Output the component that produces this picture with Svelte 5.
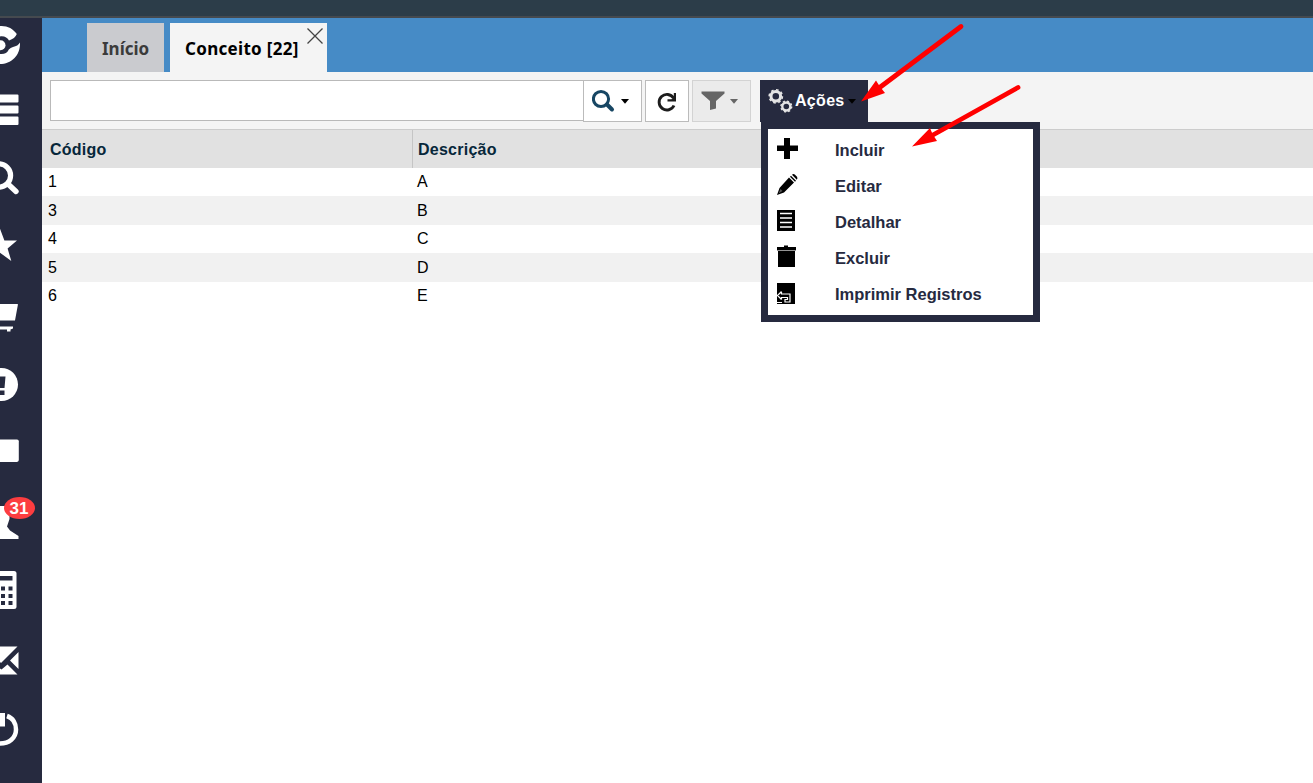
<script>
  const rows = [
    [1, 'A'],
    [3, 'B'],
    [4, 'C'],
    [5, 'D'],
    [6, 'E']
  ];
  const actions = [
    ['plus', 'Incluir'],
    ['pencil', 'Editar'],
    ['list', 'Detalhar'],
    ['trash', 'Excluir'],
    ['print', 'Imprimir Registros']
  ];
  const nav = [
    ['logo', 18, 58],
    ['menu', 76, 68],
    ['search', 144, 68],
    ['star', 212, 68],
    ['cart', 280, 70],
    ['alert', 350, 68],
    ['card', 418, 68],
    ['user', 486, 70],
    ['calc', 556, 70],
    ['mail', 626, 68],
    ['power', 694, 89]
  ];
</script>

<div class="page">
  <div class="topbar"></div>
  <div class="body">
    <nav class="sidebar">
      {#each nav as [name, top, height]}
        <div class="nav-item">
          <svg width="42" {height} viewBox="0 {top} 42 {height}" fill="#fff">
            {#if name === 'logo'}
              <path d="M0 26C7 25.500 13 28.500 16.800 34Q15 38.500 9 40.500C7.500 37.500 4 35.800 0 36.500Z" />
              <circle cx="0.500" cy="45.300" r="5" />
              <path d="M20 42.500C20.500 56 11 64 0 64V54C4 54.500 7.500 53 8.800 49.500Q10.500 47.500 13 47Q18 46 20 42.500Z" />
            {:else if name === 'menu'}
              <path d="M0 94.500h17.500q1 0 1 1v6q0 1-1 1H0ZM0 105.500h17.500q1 0 1 1v6q0 1-1 1H0ZM0 116.500h17.500q1 0 1 1v6.500q0 1-1 1H0Z" />
            {:else if name === 'search'}
              <circle cx="-1" cy="175.500" r="11.600" fill="none" stroke="#fff" stroke-width="5.200" />
              <path d="m8 184 8 7.500" stroke="#fff" stroke-width="5.400" stroke-linecap="round" />
            {:else if name === 'star'}
              <path d="m-1 226 5.400 14.500H17L7.600 248.500 11.300 261-1 252Z" />
            {:else if name === 'cart'}
              <path d="M0 304h17.500q.5 0 .4.700L15 320.500H0ZM0 326.500h13v2L10.500 329.500V331.500H7V329.500H0Z" />
            {:else if name === 'alert'}
              <circle cx="1.500" cy="384.500" r="16.500" />
              <path d="M0 376.500h5.500L4.500 388H0ZM0 390.500h4.500V395H0Z" fill="#262a3f" />
            {:else if name === 'card'}
              <path d="M0 439.500h17q1.800 0 1.800 1.800v18.800q0 1.800-1.800 1.800H0Z" />
            {:else if name === 'user'}
              <path d="M0 506H9.500V519L7 526.500 10 530.500 18.500 536V539H0Z" />
            {:else if name === 'calc'}
              <path d="M0 571h14q2.500 0 2.500 2.500v33q0 2.500-2.500 2.500H0Z" />
              <path d="M0 576h12.500v4.500H0ZM1 586.500h4v4H1ZM8.500 586.500h4v4h-4ZM1 594h4v4H1ZM8.500 594h4v4h-4ZM1 601h4v4H1ZM8.500 601h4v4h-4Z" fill="#262a3f" />
            {:else if name === 'mail'}
              <path d="M0 646.500H17.500L1 663 0 662ZM0 674.500V668.500L1.500 669.500 7.500 664.500 17.500 674.500ZM10 660.500 18.500 652V669Z" />
            {:else}
              <path d="M0 713h5v13.500H0Z" />
              <path d="M7 716C13 718 16 723.500 16 729.500 16 738 9 743.500 0 743.500" fill="none" stroke="#fff" stroke-width="4.500" />
            {/if}
          </svg>
          {#if name === 'user'}<span class="badge">31</span>{/if}
        </div>
      {/each}
    </nav>

    <main>
      <div class="tabs">
        <div class="tab home">Início</div>
        <div class="tab active">
          Conceito [22]
          <svg class="close" width="18" height="18" viewBox="0 0 18 18" fill="none" stroke="#444" stroke-width="1.300"><path d="m1.500 1.500 15 15M16.500 1.500l-15 15" /></svg>
        </div>
      </div>

      <div class="toolbar">
        <input class="query" aria-label="Pesquisar" />
        <button class="btn find" aria-label="Buscar">
          <svg width="24" height="24" viewBox="0 0 24 24" fill="none" stroke="#174663"><circle cx="9" cy="10" r="7.600" stroke-width="3" /><path d="m15 15.500 5 5" stroke-width="4" stroke-linecap="round" /></svg>
          <svg class="caret" width="8" height="5" viewBox="0 0 8 5"><path d="M0 0h8L4 4.700Z" fill="#000" /></svg>
        </button>
        <button class="btn reload" aria-label="Atualizar">
          <svg width="22" height="22" viewBox="0 0 22 22" fill="none"><path d="M17.500 7A7.800 7.800 0 1 0 18 14.500" stroke="#1d1d1d" stroke-width="2.900" /><path d="M20 2v8.500h-8.500V8.300h4L17.800 6V2Z" fill="#1d1d1d" /></svg>
        </button>
        <button class="btn filter" aria-label="Filtrar">
          <svg width="24" height="20" viewBox="0 0 24 20"><path d="M.5.500h23v2L15 10v7.500L9 19v-9L.5 2.500Z" fill="#666" /></svg>
          <svg class="caret" width="8" height="5" viewBox="0 0 8 5"><path d="M0 0h8L4 4.700Z" fill="#666" /></svg>
        </button>
        <div class="actions">
          <svg class="gears" width="26" height="26" viewBox="0 0 26 26" fill="none" stroke="#e4e4e4">
            <circle cx="7.800" cy="8.300" r="4.800" stroke-width="3" />
            <circle cx="7.800" cy="8.300" r="6.600" stroke-width="1.600" stroke-dasharray="2.600 2.584" />
            <circle cx="18.300" cy="18.500" r="4" stroke-width="2.400" />
            <circle cx="18.300" cy="18.500" r="5.400" stroke-width="1.400" stroke-dasharray="2.150 2.091" />
          </svg>
          <span class="title">Ações</span>
          <svg class="caret" width="8" height="5" viewBox="0 0 8 5"><path d="M0 0h8L4 4.700Z" fill="#000" /></svg>
          <div class="menu">
            {#each actions as [icon, label]}
              <div class="menu-item">
                <svg width="24" height="24" viewBox="0 0 24 24">
                  {#if icon === 'plus'}
                    <path d="M8 1h6v7.500h8v5.500h-8v8H8v-8H1V8.500h7Z" />
                  {:else if icon === 'pencil'}
                    <path d="m1 22 2.500-7L13 4.500l5 5L8 19.500ZM14 3.700l1-1 5 5-1 1ZM16 1.800Q17.500.500 19 1.700L21 3.800Q22 5.200 20.800 6.800Z" />
                    <path d="m2.500 20.500 2-4.500 2 2Z" fill="#555" />
                  {:else if icon === 'list'}
                    <path d="M1 1h18v21H1Z" />
                    <path d="M4 4.500h12M4 9h12M4 13.500h12M4 18h12" stroke="#fff" stroke-width="1.300" />
                  {:else if icon === 'trash'}
                    <path d="M1 2h7V.5h4V2h8v3.500H1ZM2 6h17v16H2Z" />
                    <path d="M1 5.500h19" stroke="#999" stroke-width=".8" />
                  {:else}
                    <path d="M1 2h18v21H1Z" />
                    <path d="M5.500 10.500 1.500 14.500l4 4M1.500 14.500M5.500 11v2h8.500v8H9v-2.500h2.500v-2H5.500v2M1 21.500h5" fill="none" stroke="#fff" stroke-width="1.200" />
                  {/if}
                </svg>
                <span>{label}</span>
              </div>
            {/each}
          </div>
        </div>
      </div>

      <div class="grid-row head"><div>Código</div><div>Descrição</div></div>
      {#each rows as [code, desc]}
        <div class="grid-row"><div>{code}</div><div>{desc}</div></div>
      {/each}
    </main>
  </div>

  <svg class="arrows" width="1313" height="783" viewBox="0 0 1313 783" fill="#f00" stroke="#f00" stroke-linecap="round">
    <path d="M961 26.500 879 88" stroke-width="4.800" />
    <path d="M861 101.500 876 80.500 879.500 86 885 93Z" stroke="none" />
    <path d="M1018 87.500 932 135.500" stroke-width="4.800" />
    <path d="M912 146.500 930 128 932.500 134 937 141Z" stroke="none" />
  </svg>
</div>

<style>
  :global(body) { margin: 0; overflow: hidden; }
  .page { position: relative; width: 1313px; height: 783px; overflow: hidden; background: #fff; font-family: "Liberation Sans", Arial, sans-serif; font-size: 16px; color: #000; }
  .page, .page * { box-sizing: border-box; }
  svg { display: block; flex: none; }
  .topbar { height: 18px; background: #2c3d49; border-bottom: 2px solid #454a4f; }
  .body { display: flex; height: 765px; }
  .sidebar { width: 42px; flex: none; background: #262a3f; overflow: hidden; }
  .nav-item { position: relative; }
  .badge { position: absolute; left: 4px; top: 11px; width: 31px; height: 22px; border-radius: 50%; background: #fc3d40; color: #fff; font: bold 17px/23px "Liberation Sans", Arial, sans-serif; text-align: center; padding-right: 1px; }
  main { flex: 1; min-width: 0; }
  .tabs { height: 54px; padding: 5px 0 0 45px; display: flex; gap: 6px; background: #468bc6; }
  .tab { position: relative; height: 49px; padding-left: 15px; font: bold 17px/52px "Noto Sans", sans-serif; white-space: nowrap; }
  .home { width: 77px; background: #cacbcf; color: #3b3b3b; }
  .active { width: 157px; background: #f4f4f4; letter-spacing: 0.3px; }
  .close { position: absolute; right: 3px; top: 4px; }
  .toolbar { display: flex; align-items: flex-start; height: 57px; padding: 8px 0 0 8px; background: #f4f4f4; }
  .query { width: 534px; height: 41px; border: 1px solid #b9b9b9; background: #fff; padding: 0 8px; outline: 0; border-radius: 0; }
  .btn { display: flex; align-items: center; height: 42px; margin: 0; padding: 0; border: 1px solid #bbb; background: #fff; }
  .find { width: 59px; margin-left: -1px; padding-left: 8px; gap: 4px; }
  .find .caret { margin-left: 1px; }
  .reload { width: 44px; margin-left: 3px; padding: 2px 0 0 10px; }
  .filter { width: 59px; margin-left: 3px; padding-left: 8px; gap: 5px; background: #ebebeb; border-color: #d3d3d3; }
  .actions { position: relative; z-index: 1; display: flex; width: 108px; height: 42px; margin-left: 9px; padding: 0 0 0 8px; background: #262a3f; color: #fff; font-weight: bold; line-height: 41px; }
  .title { letter-spacing: 0.3px; }
  .gears { margin: 8px 1px 0 0; }
  .actions > .caret { margin: 19px 0 0 3px; }
  .menu { position: absolute; left: 1px; top: 42px; width: 279px; height: 200px; border: 7px solid #262a3f; background: #fff; color: #262a3f; padding-top: 3px; }
  .menu-item { display: flex; height: 36px; padding-left: 8px; font-size: 16.5px; line-height: 36px; white-space: nowrap; }
  .menu-item svg { margin: 5px 35px 0 0; }
  .grid-row { display: grid; grid-template-columns: 370px 1fr; height: 28px; line-height: 28px; background: #fff; }
  .grid-row:nth-child(odd) { height: 29px; line-height: 30px; background: #f1f1f1; }
  .grid-row > div { height: 100%; padding-left: 6px; }
  .grid-row > div + div { padding-left: 5px; }
  .head.grid-row { height: 39px; grid-template-rows: 38px; background: #e1e1e1; border-top: 1px solid #ccc; line-height: 40px; font-weight: bold; letter-spacing: 0.25px; color: #07273a; }
  .head > div:first-child { padding-left: 8px; }
  .head > div + div { border-left: 1px solid #c5c5c5; padding-left: 5px; }
  .arrows { position: absolute; inset: 0; z-index: 2; pointer-events: none; }
</style>
